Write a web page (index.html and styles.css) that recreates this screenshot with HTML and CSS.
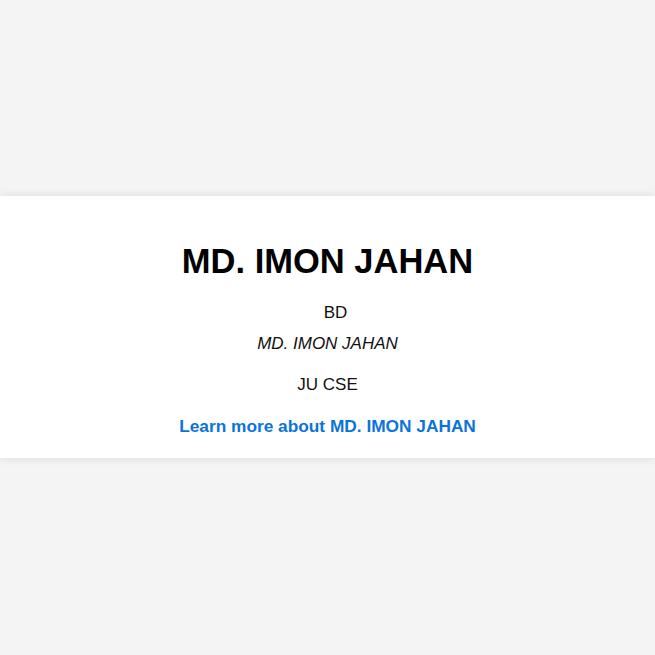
FILE: index.html
```html
<!DOCTYPE html>
<html lang="en">
<head>
<meta charset="utf-8">
<title>MD. IMON JAHAN</title>
<link rel="stylesheet" href="styles.css">
</head>
<body>
<main class="page">
  <section class="card">
    <h1 class="title">MD. IMON JAHAN</h1>
    <p class="country"><span class="flag">BD</span></p>
    <p class="name"><em>MD. IMON JAHAN</em></p>
    <p class="dept">JU CSE</p>
    <p class="more"><a class="link" href="#">Learn more about MD. IMON JAHAN</a></p>
  </section>
</main>
</body>
</html>
```

FILE: styles.css
```css
html, body {
  margin: 0;
  padding: 0;
}
body {
  background: #f4f4f4;
  font-family: "Liberation Sans", Arial, sans-serif;
  font-size: 17px;
  line-height: 20px;
  color: #111;
}
.page {
  display: flex;
  flex-direction: column;
  justify-content: center;
  min-height: 655px;
}
.card {
  background: #fff;
  box-shadow: 0 0 10px rgba(0, 0, 0, 0.1);
  padding: 21px 20px;
  text-align: center;
  margin-top: -1px;
}
.title {
  font-size: 34.5px;
  line-height: 40px;
  font-weight: bold;
  margin: 24px 0 21px;
  color: #000;
}
.card p {
  margin: 0 0 21px;
}
.card .country {
  margin-bottom: 11px;
  padding-top: 1px;
}
.flag {
  padding-left: 16px;
}
.card .more {
  margin: 0;
}
.link {
  color: #0a74da;
  font-weight: bold;
  font-size: 17.3px;
  text-decoration: none;
}
```
